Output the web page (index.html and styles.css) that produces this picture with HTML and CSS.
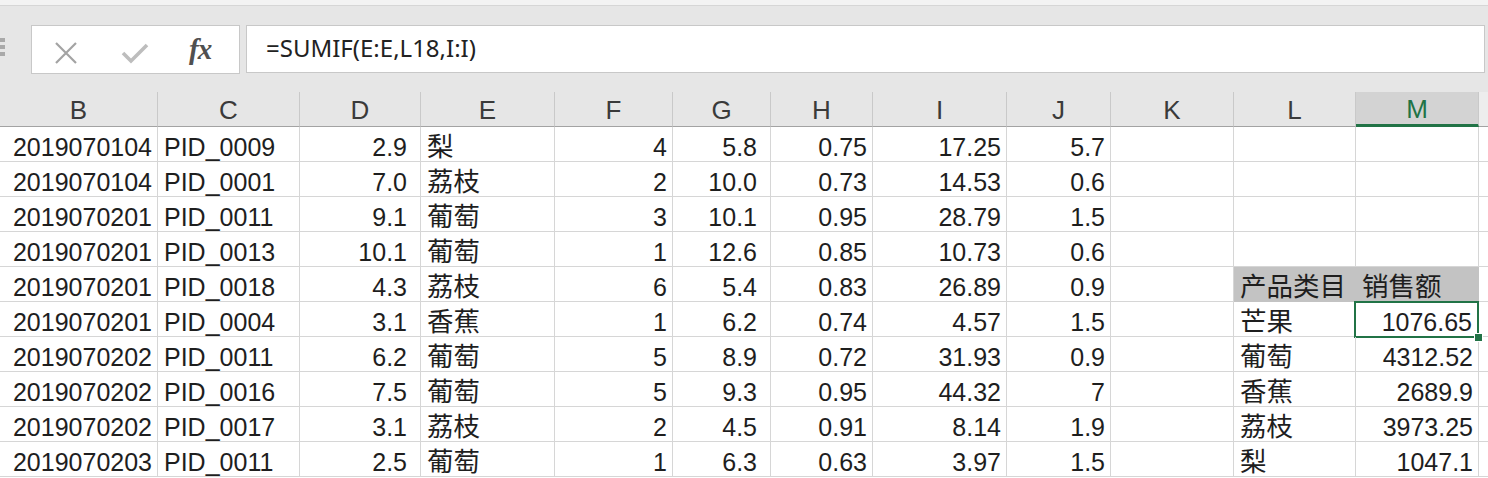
FILE: index.html
```html
<!DOCTYPE html>
<html lang="zh">
<head>
<meta charset="utf-8">
<title>Sheet</title>
<link rel="stylesheet" href="styles.css">
</head>
<body>
<div class="topstrip"></div>
<div class="toolbar">
  <div class="grip"><span></span><span></span><span></span></div>
  <div class="fxbox">
    <svg class="ic-x" width="26" height="22" viewBox="0 0 26 22"><path d="M3 1 L23 21 M23 1 L3 21" stroke="#a3a3a3" stroke-width="2.2" fill="none"/></svg>
    <svg class="ic-ok" width="28" height="22" viewBox="0 0 28 22"><path d="M2 11 L10 19 L26 3" stroke="#bdbdbd" stroke-width="3.6" fill="none"/></svg>
    <span class="ic-fx">fx</span>
  </div>
  <div class="formula">=SUMIF(E:E,L18,I:I)</div>
</div>
<div class="sheet">
  <div class="h">B</div><div class="h">C</div><div class="h">D</div><div class="h">E</div><div class="h">F</div><div class="h">G</div><div class="h">H</div><div class="h">I</div><div class="h">J</div><div class="h">K</div><div class="h">L</div><div class="h sel">M</div><div class="h end"></div>

  <div class="c r">2019070104</div><div class="c">PID_0009</div><div class="c r p2">2.9</div><div class="c zh">梨</div><div class="c r">4</div><div class="c r p2">5.8</div><div class="c r">0.75</div><div class="c r">17.25</div><div class="c r">5.7</div><div class="c"></div><div class="c"></div><div class="c"></div><div class="c end"></div>

  <div class="c r">2019070104</div><div class="c">PID_0001</div><div class="c r p2">7.0</div><div class="c zh">荔枝</div><div class="c r">2</div><div class="c r p2">10.0</div><div class="c r">0.73</div><div class="c r">14.53</div><div class="c r">0.6</div><div class="c"></div><div class="c"></div><div class="c"></div><div class="c end"></div>

  <div class="c r">2019070201</div><div class="c">PID_0011</div><div class="c r p2">9.1</div><div class="c zh">葡萄</div><div class="c r">3</div><div class="c r p2">10.1</div><div class="c r">0.95</div><div class="c r">28.79</div><div class="c r">1.5</div><div class="c"></div><div class="c"></div><div class="c"></div><div class="c end"></div>

  <div class="c r">2019070201</div><div class="c">PID_0013</div><div class="c r p2">10.1</div><div class="c zh">葡萄</div><div class="c r">1</div><div class="c r p2">12.6</div><div class="c r">0.85</div><div class="c r">10.73</div><div class="c r">0.6</div><div class="c"></div><div class="c"></div><div class="c"></div><div class="c end"></div>

  <div class="c r">2019070201</div><div class="c">PID_0018</div><div class="c r p2">4.3</div><div class="c zh">荔枝</div><div class="c r">6</div><div class="c r p2">5.4</div><div class="c r">0.83</div><div class="c r">26.89</div><div class="c r">0.9</div><div class="c"></div><div class="c zh fill">产品类目</div><div class="c zh fill">销售额</div><div class="c end"></div>

  <div class="c r">2019070201</div><div class="c">PID_0004</div><div class="c r p2">3.1</div><div class="c zh">香蕉</div><div class="c r">1</div><div class="c r p2">6.2</div><div class="c r">0.74</div><div class="c r">4.57</div><div class="c r">1.5</div><div class="c"></div><div class="c zh">芒果</div><div class="c r active">1076.65<span class="handle"></span></div><div class="c end"></div>

  <div class="c r">2019070202</div><div class="c">PID_0011</div><div class="c r p2">6.2</div><div class="c zh">葡萄</div><div class="c r">5</div><div class="c r p2">8.9</div><div class="c r">0.72</div><div class="c r">31.93</div><div class="c r">0.9</div><div class="c"></div><div class="c zh">葡萄</div><div class="c r">4312.52</div><div class="c end"></div>

  <div class="c r">2019070202</div><div class="c">PID_0016</div><div class="c r p2">7.5</div><div class="c zh">葡萄</div><div class="c r">5</div><div class="c r p2">9.3</div><div class="c r">0.95</div><div class="c r">44.32</div><div class="c r">7</div><div class="c"></div><div class="c zh">香蕉</div><div class="c r">2689.9</div><div class="c end"></div>

  <div class="c r">2019070202</div><div class="c">PID_0017</div><div class="c r p2">3.1</div><div class="c zh">荔枝</div><div class="c r">2</div><div class="c r p2">4.5</div><div class="c r">0.91</div><div class="c r">8.14</div><div class="c r">1.9</div><div class="c"></div><div class="c zh">荔枝</div><div class="c r">3973.25</div><div class="c end"></div>

  <div class="c r">2019070203</div><div class="c">PID_0011</div><div class="c r p2">2.5</div><div class="c zh">葡萄</div><div class="c r">1</div><div class="c r p2">6.3</div><div class="c r">0.63</div><div class="c r">3.97</div><div class="c r">1.5</div><div class="c"></div><div class="c zh">梨</div><div class="c r">1047.1</div><div class="c end"></div>
</div>
</body>
</html>
```

FILE: styles.css
```css
html, body {
  margin: 0;
  padding: 0;
  background: #ffffff;
  overflow: hidden;
  width: 1488px;
  height: 478px;
}
body {
  font-family: "Liberation Sans", "Noto Sans CJK SC", sans-serif;
  color: #1e1e1e;
}
.topstrip {
  height: 5px;
  background: #f3f3f3;
  border-bottom: 1px solid #d6d6d6;
}
.toolbar {
  height: 86px;
  box-sizing: border-box;
  background: #e6e6e6;
  display: flex;
  align-items: flex-start;
  padding-top: 19px;
}
.grip {
  width: 5px;
  margin-top: 13px;
  display: flex;
  flex-direction: column;
  gap: 3px;
}
.grip span {
  display: block;
  width: 5px;
  height: 4px;
  background: #a9a9a9;
}
.fxbox {
  margin-left: 26px;
  width: 209px;
  height: 49px;
  box-sizing: border-box;
  background: #ffffff;
  border: 1px solid #c8c8c8;
  display: flex;
  align-items: center;
  position: relative;
}
.ic-x {
  margin-left: 21px;
  margin-top: 6px;
}
.ic-ok {
  margin-left: 42px;
  margin-top: 6px;
}
.ic-fx {
  margin-left: 40px;
  font-family: "Liberation Serif", "DejaVu Serif", serif;
  font-style: italic;
  font-weight: bold;
  font-size: 29px;
  color: #505050;
  letter-spacing: -1px;
}
.formula {
  margin-left: 6px;
  width: 1239px;
  height: 48px;
  box-sizing: border-box;
  background: #ffffff;
  border: 1px solid #c8c8c8;
  font-family: "Noto Sans", "Open Sans", sans-serif;
  font-size: 24px;
  line-height: 44px;
  padding-left: 19px;
  color: #222222;
}
.sheet {
  display: grid;
  grid-template-columns: 158px 142px 121px 134px 118px 98px 102px 134px 104px 123px 122px 123px 9px;
  grid-auto-rows: 35px;
}
.h {
  background: #e6e6e6;
  border-right: 1px solid #c9c9c9;
  border-bottom: 1px solid #a3a3a3;
  box-sizing: border-box;
  text-align: center;
  font-size: 26px;
  line-height: 36px;
  color: #3a3a3a;
}
.h.sel {
  background: #d3d3d3;
  color: #217346;
  border-bottom: 3px solid #217346;
  line-height: 34px;
}
.h.end {
  background: #ededed;
  border-right: none;
}
.c {
  box-sizing: border-box;
  border-right: 1px solid #d6d6d6;
  border-bottom: 1px solid #d6d6d6;
  font-size: 25px;
  line-height: 29px;
  padding: 6px 6px 0 6px;
  white-space: nowrap;
  overflow: visible;
  position: relative;
}
.c.r {
  text-align: right;
  padding-right: 5px;
}
.c.r.p2 {
  padding-right: 13px;
}
.c.zh {
  font-size: 26.5px;
  padding-left: 6px;
}
.c.fill {
  background: #c3c3c3;
  border-color: #c3c3c3;
}
.c.end {
  border-right: none;
}
.c.active {
  padding-right: 6px;
}
.c.active::after {
  content: "";
  position: absolute;
  left: -2px;
  top: -1px;
  right: -1px;
  bottom: -2px;
  border: 2px solid #217346;
}
.handle {
  position: absolute;
  right: -5px;
  bottom: -6px;
  width: 7px;
  height: 7px;
  background: #217346;
  border: 1px solid #ffffff;
  z-index: 2;
}
```
